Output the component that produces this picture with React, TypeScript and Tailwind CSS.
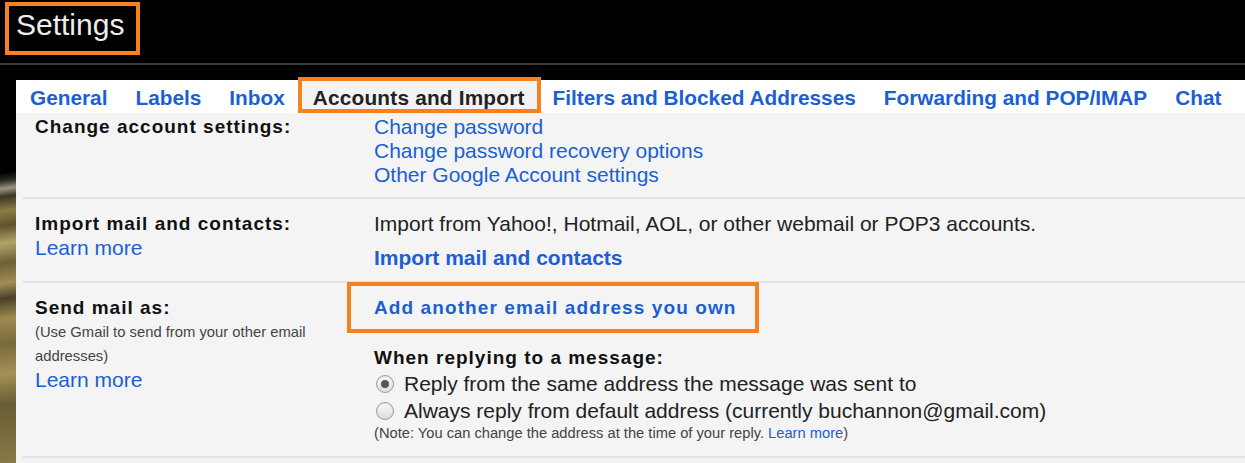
import React from 'react';

const tabs = [
  'General',
  'Labels',
  'Inbox',
  'Accounts and Import',
  'Filters and Blocked Addresses',
  'Forwarding and POP/IMAP',
  'Chat',
];

function Radio({ checked }: { checked?: boolean }) {
  return (
    <span className="ml-[2px] mr-[10px] flex h-[18px] w-[18px] shrink-0 items-center justify-center rounded-full border border-[#9d9d9d] bg-[linear-gradient(180deg,#fafafa,#dcdcdc)] shadow-[inset_0_1px_1px_rgba(0,0,0,0.1)]">
      {checked && <span className="h-[8px] w-[8px] rounded-full bg-[#555]" />}
    </span>
  );
}

export default function App() {
  return (
    <div className="min-h-[463px] w-full overflow-hidden bg-black font-['Liberation_Sans',Arial,sans-serif]">
      {/* page title */}
      <header className="h-[63px] pl-[5px] pt-[2px]">
        <div className="h-[53px] w-[135px] border-4 border-[#f5821f] pl-[7px] pt-[4px] text-[30px] leading-[30px] text-[#ececec]">
          Settings
        </div>
      </header>
      <div className="h-[2px] bg-[#3a3a3a]" />
      <div className="h-[15px]" />

      <div className="flex">
        {/* background wallpaper peeking out on the left */}
        <div className="w-[16px] shrink-0 bg-[linear-gradient(172deg,#000_0px,#000_92px,#2a2a24_100px,#9a9580_108px,#3b3626_116px,#8d7b45_130px,#5e5230_145px,#b3a26a_162px,#6d6038_182px,#a08e55_202px,#4a4128_217px,#9c8a50_237px,#7a6a3c_262px,#a39158_292px,#6a5c34_322px,#8a7a48_383px)]" />

        <main className="flex-1 bg-[#f4f4f4] pb-[10px]">
          {/* tabs */}
          <nav className="flex h-[33px] bg-white">
            {tabs.map((t) =>
              t === 'Accounts and Import' ? (
                <div
                  key={t}
                  className="relative bg-[#f3f3f3] px-[14px] pt-[2px] text-[20.8px] font-bold leading-[31px] tracking-[0.2px] text-[#222] whitespace-nowrap"
                >
                  {t}
                  <span className="absolute -top-[3px] -left-[1px] -right-[2px] bottom-0 border-4 border-[#f5821f]" />
                </div>
              ) : (
                <div
                  key={t}
                  className="px-[14px] pt-[2px] text-[20.8px] font-bold leading-[31px] text-[#1b5fd3] whitespace-nowrap"
                >
                  {t}
                </div>
              )
            )}
          </nav>

          <div className="ml-[7px]">
            {/* Change account settings */}
            <div className="grid grid-cols-[339px_1fr] border-b-2 border-[#e3e3e3] pl-[12px] pt-[2px] pb-[10px]">
              <div className="text-[19px] font-bold leading-[24px] tracking-[1px] text-[#111]">
                Change account settings:
              </div>
              <div className="text-[21px] leading-[24px] text-[#1b5fd3]">
                <div>Change password</div>
                <div>Change password recovery options</div>
                <div>Other Google Account settings</div>
              </div>
            </div>

            {/* Import mail and contacts */}
            <div className="grid grid-cols-[339px_1fr] border-b-2 border-[#e3e3e3] pl-[12px] pt-[13px] pb-[11px]">
              <div>
                <div className="text-[19px] font-bold leading-[24px] tracking-[1px] text-[#111]">
                  Import mail and contacts:
                </div>
                <div className="text-[21px] leading-[24px] text-[#1b5fd3]">Learn more</div>
              </div>
              <div>
                <div className="text-[21px] leading-[24px] text-[#222]">
                  Import from Yahoo!, Hotmail, AOL, or other webmail or POP3 accounts.
                </div>
                <div className="mt-[10px] text-[21px] font-bold leading-[24px] text-[#1b5fd3]">
                  Import mail and contacts
                </div>
              </div>
            </div>

            {/* Send mail as */}
            <div className="grid grid-cols-[339px_1fr] border-b-2 border-[#e3e3e3] pl-[12px] pt-[13px] pb-[14px]">
              <div>
                <div className="text-[19px] font-bold leading-[24px] tracking-[1px] text-[#111]">
                  Send mail as:
                </div>
                <div className="text-[14.8px] leading-[24px] text-[#444]">
                  (Use Gmail to send from your other email
                  <br />
                  addresses)
                </div>
                <div className="text-[21px] leading-[24px] text-[#1b5fd3]">Learn more</div>
              </div>
              <div>
                <div className="relative inline-block text-[19px] font-bold leading-[24px] tracking-[1.1px] text-[#1b5fd3]">
                  Add another email address you own
                  <span className="absolute -left-[27px] -top-[14px] -right-[22px] -bottom-[13px] border-4 border-[#f5821f]" />
                </div>
                <div className="mt-[25px] text-[19px] font-bold leading-[24px] tracking-[1px] text-[#111]">
                  When replying to a message:
                </div>
                <label className="flex h-[27px] items-center text-[21px] text-[#222]">
                  <Radio checked />
                  Reply from the same address the message was sent to
                </label>
                <label className="flex h-[27px] items-center text-[21px] text-[#222]">
                  <Radio />
                  Always reply from default address (currently buchannon@gmail.com)
                </label>
                <div className="text-[14.7px] leading-[18px] text-[#444]">
                  (Note: You can change the address at the time of your reply.{' '}
                  <span className="text-[#1b5fd3]">Learn more</span>)
                </div>
              </div>
            </div>
          </div>
        </main>
      </div>
    </div>
  );
}
